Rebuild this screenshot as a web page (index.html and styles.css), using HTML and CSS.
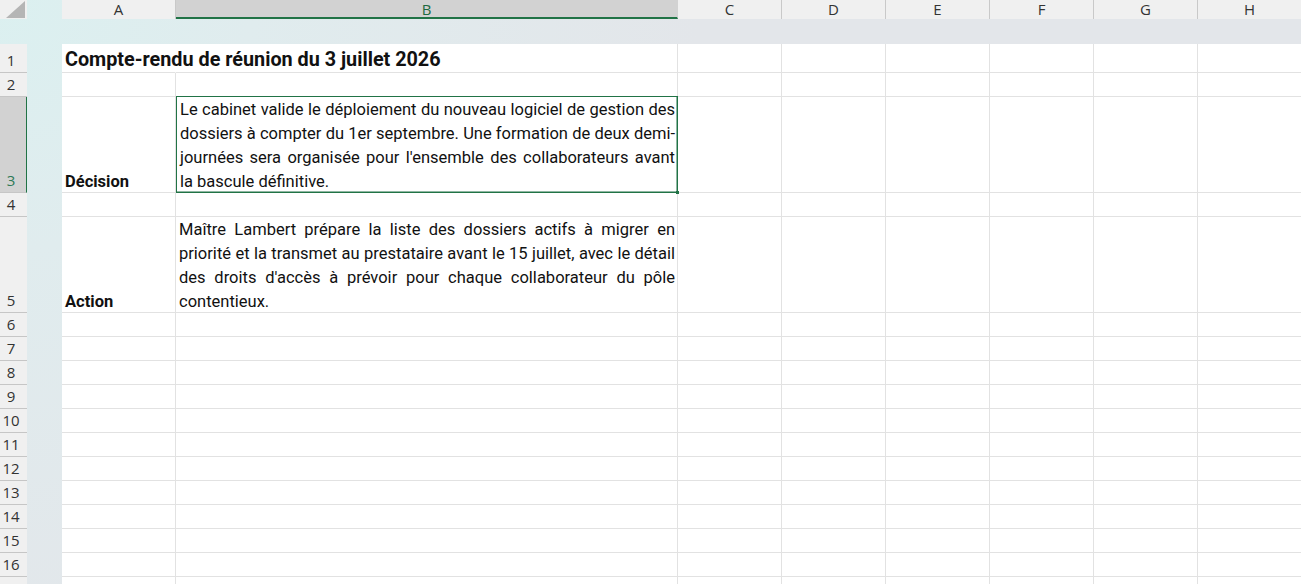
FILE: index.html
```html
<!DOCTYPE html>
<html>
<head>
    <title>Compte-rendu</title>
    <meta name="viewport" content="width=device-width, initial-scale=1">
    <link rel="stylesheet" href="styles.css">
</head>
<body>
    <div class="sheet">
        <div class="col-heads">
            <div class="corner">
                <svg width="27" height="19" viewBox="0 0 27 19"><polygon points="6,18 25,18 25,1" fill="#b5b5b5"/></svg>
            </div>
            <div class="gutter"></div>
            <div class="ch col-a">A</div>
            <div class="ch col-b selected">B</div>
            <div class="ch">C</div>
            <div class="ch">D</div>
            <div class="ch">E</div>
            <div class="ch">F</div>
            <div class="ch">G</div>
            <div class="ch">H</div>
        </div>
        <div class="band"></div>

        <div class="row r-title">
            <div class="rh">1</div>
            <div class="gutter"></div>
            <div class="cell col-a title-cell"><span class="title">Compte-rendu de réunion du 3 juillet 2026</span></div>
            <div class="cell col-b"></div>
            <div class="cell"></div><div class="cell"></div><div class="cell"></div><div class="cell"></div><div class="cell"></div><div class="cell"></div>
        </div>
        <div class="row">
            <div class="rh">2</div>
            <div class="gutter"></div>
            <div class="cell col-a"></div>
            <div class="cell col-b"></div>
            <div class="cell"></div><div class="cell"></div><div class="cell"></div><div class="cell"></div><div class="cell"></div><div class="cell"></div>
        </div>
        <div class="row r-tall">
            <div class="rh selected">3</div>
            <div class="gutter"></div>
            <div class="cell col-a label">Décision</div>
            <div class="cell col-b wrap active">
                <span class="jl">Le cabinet valide le déploiement du nouveau logiciel de gestion des</span>
                <span class="jl">dossiers à compter du 1er septembre. Une formation de deux demi-</span>
                <span class="jl">journées sera organisée pour l'ensemble des collaborateurs avant</span>
                <span class="ll">la bascule définitive.</span>
                <span class="handle"></span>
            </div>
            <div class="cell"></div><div class="cell"></div><div class="cell"></div><div class="cell"></div><div class="cell"></div><div class="cell"></div>
        </div>
        <div class="row">
            <div class="rh">4</div>
            <div class="gutter"></div>
            <div class="cell col-a"></div>
            <div class="cell col-b"></div>
            <div class="cell"></div><div class="cell"></div><div class="cell"></div><div class="cell"></div><div class="cell"></div><div class="cell"></div>
        </div>
        <div class="row r-tall">
            <div class="rh">5</div>
            <div class="gutter"></div>
            <div class="cell col-a label">Action</div>
            <div class="cell col-b wrap">
                <span class="jl">Maître Lambert prépare la liste des dossiers actifs à migrer en</span>
                <span class="jl">priorité et la transmet au prestataire avant le 15 juillet, avec le détail</span>
                <span class="jl">des droits d'accès à prévoir pour chaque collaborateur du pôle</span>
                <span class="ll">contentieux.</span>
            </div>
            <div class="cell"></div><div class="cell"></div><div class="cell"></div><div class="cell"></div><div class="cell"></div><div class="cell"></div>
        </div>
        <div class="row"><div class="rh">6</div><div class="gutter"></div><div class="cell col-a"></div><div class="cell col-b"></div><div class="cell"></div><div class="cell"></div><div class="cell"></div><div class="cell"></div><div class="cell"></div><div class="cell"></div></div>
        <div class="row"><div class="rh">7</div><div class="gutter"></div><div class="cell col-a"></div><div class="cell col-b"></div><div class="cell"></div><div class="cell"></div><div class="cell"></div><div class="cell"></div><div class="cell"></div><div class="cell"></div></div>
        <div class="row"><div class="rh">8</div><div class="gutter"></div><div class="cell col-a"></div><div class="cell col-b"></div><div class="cell"></div><div class="cell"></div><div class="cell"></div><div class="cell"></div><div class="cell"></div><div class="cell"></div></div>
        <div class="row"><div class="rh">9</div><div class="gutter"></div><div class="cell col-a"></div><div class="cell col-b"></div><div class="cell"></div><div class="cell"></div><div class="cell"></div><div class="cell"></div><div class="cell"></div><div class="cell"></div></div>
        <div class="row"><div class="rh">10</div><div class="gutter"></div><div class="cell col-a"></div><div class="cell col-b"></div><div class="cell"></div><div class="cell"></div><div class="cell"></div><div class="cell"></div><div class="cell"></div><div class="cell"></div></div>
        <div class="row"><div class="rh">11</div><div class="gutter"></div><div class="cell col-a"></div><div class="cell col-b"></div><div class="cell"></div><div class="cell"></div><div class="cell"></div><div class="cell"></div><div class="cell"></div><div class="cell"></div></div>
        <div class="row"><div class="rh">12</div><div class="gutter"></div><div class="cell col-a"></div><div class="cell col-b"></div><div class="cell"></div><div class="cell"></div><div class="cell"></div><div class="cell"></div><div class="cell"></div><div class="cell"></div></div>
        <div class="row"><div class="rh">13</div><div class="gutter"></div><div class="cell col-a"></div><div class="cell col-b"></div><div class="cell"></div><div class="cell"></div><div class="cell"></div><div class="cell"></div><div class="cell"></div><div class="cell"></div></div>
        <div class="row"><div class="rh">14</div><div class="gutter"></div><div class="cell col-a"></div><div class="cell col-b"></div><div class="cell"></div><div class="cell"></div><div class="cell"></div><div class="cell"></div><div class="cell"></div><div class="cell"></div></div>
        <div class="row"><div class="rh">15</div><div class="gutter"></div><div class="cell col-a"></div><div class="cell col-b"></div><div class="cell"></div><div class="cell"></div><div class="cell"></div><div class="cell"></div><div class="cell"></div><div class="cell"></div></div>
        <div class="row"><div class="rh">16</div><div class="gutter"></div><div class="cell col-a"></div><div class="cell col-b"></div><div class="cell"></div><div class="cell"></div><div class="cell"></div><div class="cell"></div><div class="cell"></div><div class="cell"></div></div>
        <div class="row"><div class="rh">17</div><div class="gutter"></div><div class="cell col-a"></div><div class="cell col-b"></div><div class="cell"></div><div class="cell"></div><div class="cell"></div><div class="cell"></div><div class="cell"></div><div class="cell"></div></div>
    </div>
</body>
</html>
```

FILE: styles.css
```css
html, body {
    margin: 0;
    padding: 0;
    height: 100%;
    overflow: hidden;
}
body {
    font-family: 'Roboto', 'Noto Sans', sans-serif;
}
.sheet {
    width: 1301px;
    height: 584px;
    overflow: hidden;
    background: radial-gradient(circle at 0 0, #dbf0f0 0, #e0ecee 250px, #e3e6ea 700px);
}
.col-heads {
    display: flex;
    height: 19px;
}
.corner {
    width: 27px;
    flex: none;
    background: #f0f0f0;
    height: 19px;
}
.corner svg { display: block; }
.gutter {
    width: 35px;
    flex: none;
}
.ch {
    width: 104px;
    flex: none;
    box-sizing: border-box;
    background: #f0f0f0;
    border-right: 1px solid #c9c9c9;
    font-family: 'Open Sans', 'Noto Sans', sans-serif;
    font-size: 15px;
    line-height: 19px;
    color: #333;
    text-align: center;
}
.ch.col-a { width: 114px; }
.ch.col-b { width: 502px; }
.ch.selected {
    background: #d2d2d2;
    color: #1e6b41;
    border-bottom: 2px solid #217346;
    border-right-color: #d2d2d2;
}
.band { height: 25px; }

.row {
    display: flex;
    height: 24px;
}
.r-title { height: 29px; }
.r-tall { height: 96px; }
.rh {
    width: 27px;
    flex: none;
    box-sizing: border-box;
    background: #f0f0f0;
    border-bottom: 1px solid #c6c6c6;
    font-family: 'Open Sans', 'Noto Sans', sans-serif;
    font-size: 15px;
    color: #333;
    text-align: center;
    padding-right: 5px;
    display: flex;
    align-items: flex-end;
    justify-content: center;
    line-height: 23px;
}
.rh.selected {
    background: #d2d2d2;
    color: #2f7a57;
    border-right: 1px solid #217346;
    padding-right: 4px;
}
.cell {
    width: 104px;
    flex: none;
    box-sizing: border-box;
    background: #fff;
    border-right: 1px solid #e2e2e2;
    border-bottom: 1px solid #e2e2e2;
    font-size: 16.5px;
    color: #111;
    padding: 0 2px 0 3px;
    line-height: 24px;
    position: relative;
}
.cell.col-a { width: 114px; }
.cell.col-b { width: 502px; }
.title-cell {
    border-right-color: #fff;
    overflow: visible;
    white-space: nowrap;
    display: flex;
    align-items: flex-end;
    z-index: 1;
}
.title {
    font-weight: 700;
    font-size: 19.8px;
    line-height: 24px;
}
.label {
    font-weight: 700;
    display: flex;
    align-items: flex-end;
    line-height: 21px;
}
.wrap {
    display: flex;
    flex-direction: column;
    justify-content: flex-end;
}
.jl, .ll {
    display: block;
    white-space: nowrap;
    position: relative;
    top: 2px;
}
.jl {
    text-align: justify;
    text-align-last: justify;
    white-space: normal;
}
.active {
    border: 1px solid #217346;
    box-shadow: inset -1px -1px 0 #8fb7a2;
    z-index: 2;
    margin-top: -1px;
    height: 97px;
}
.handle {
    position: absolute;
    right: -2px;
    bottom: -2px;
    width: 3px;
    height: 3px;
    background: #217346;
}
```
